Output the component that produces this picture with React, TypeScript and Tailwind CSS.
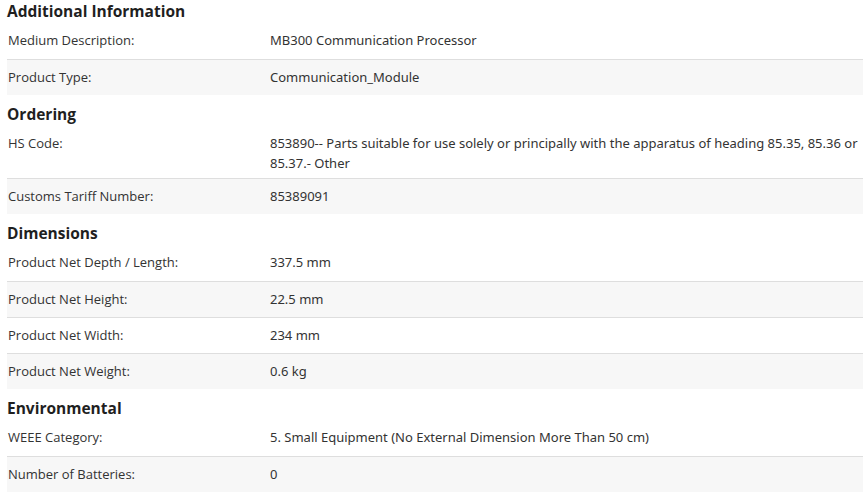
import React from "react";

type Row = [string, React.ReactNode];
const sections: { title: string; rows: Row[] }[] = [
  {
    title: "Additional Information",
    rows: [
      ["Medium Description:", "MB300 Communication Processor"],
      ["Product Type:", "Communication_Module"],
    ],
  },
  {
    title: "Ordering",
    rows: [
      [
        "HS Code:",
        "853890-- Parts suitable for use solely or principally with the apparatus of heading 85.35, 85.36 or 85.37.- Other",
      ],
      ["Customs Tariff Number:", "85389091"],
    ],
  },
  {
    title: "Dimensions",
    rows: [
      ["Product Net Depth / Length:", "337.5 mm"],
      ["Product Net Height:", "22.5 mm"],
      ["Product Net Width:", "234 mm"],
      ["Product Net Weight:", "0.6 kg"],
    ],
  },
  {
    title: "Environmental",
    rows: [
      ["WEEE Category:", "5. Small Equipment (No External Dimension More Than 50 cm)"],
      ["Number of Batteries:", "0"],
    ],
  },
];

export default function App() {
  return (
    <div className="w-[863px] h-[492px] overflow-hidden bg-white text-[#333]">
      <div className="ml-[7px] w-[880px]">
        {sections.map((s, si) => (
          <div key={s.title}>
            <div
              className={`${si === 0 ? "pt-[1px]" : "pt-[9px]"} pb-[1px] text-[15.5px] leading-[20px] font-bold text-[#1f1f1f]`}
              style={{ fontFamily: '"Open Sans", sans-serif' }}
            >
              {s.title}
            </div>
            <div>
              {s.rows.map(([l, v], i) => (
                <div
                  key={l}
                  className={`flex text-[13px] leading-[20px] ${
                    i === 0
                      ? s.title === "Ordering"
                        ? "pt-[8px] pb-[5px]"
                        : "pt-[8px] pb-[9px]"
                      : "border-t border-[#dedede] pt-[7px] pb-[8px]"
                  } ${i % 2 === 1 ? "bg-[#f7f7f7]" : "bg-white"}`}
                >
                  <div
                    className="w-[263px] shrink-0 pl-[1px]"
                    style={{ fontFamily: '"Open Sans", sans-serif' }}
                  >
                    {l}
                  </div>
                  <div
                    className="w-[600px]"
                    style={{ fontFamily: '"Noto Sans", sans-serif' }}
                  >
                    {v}
                  </div>
                </div>
              ))}
            </div>
          </div>
        ))}
      </div>
    </div>
  );
}
